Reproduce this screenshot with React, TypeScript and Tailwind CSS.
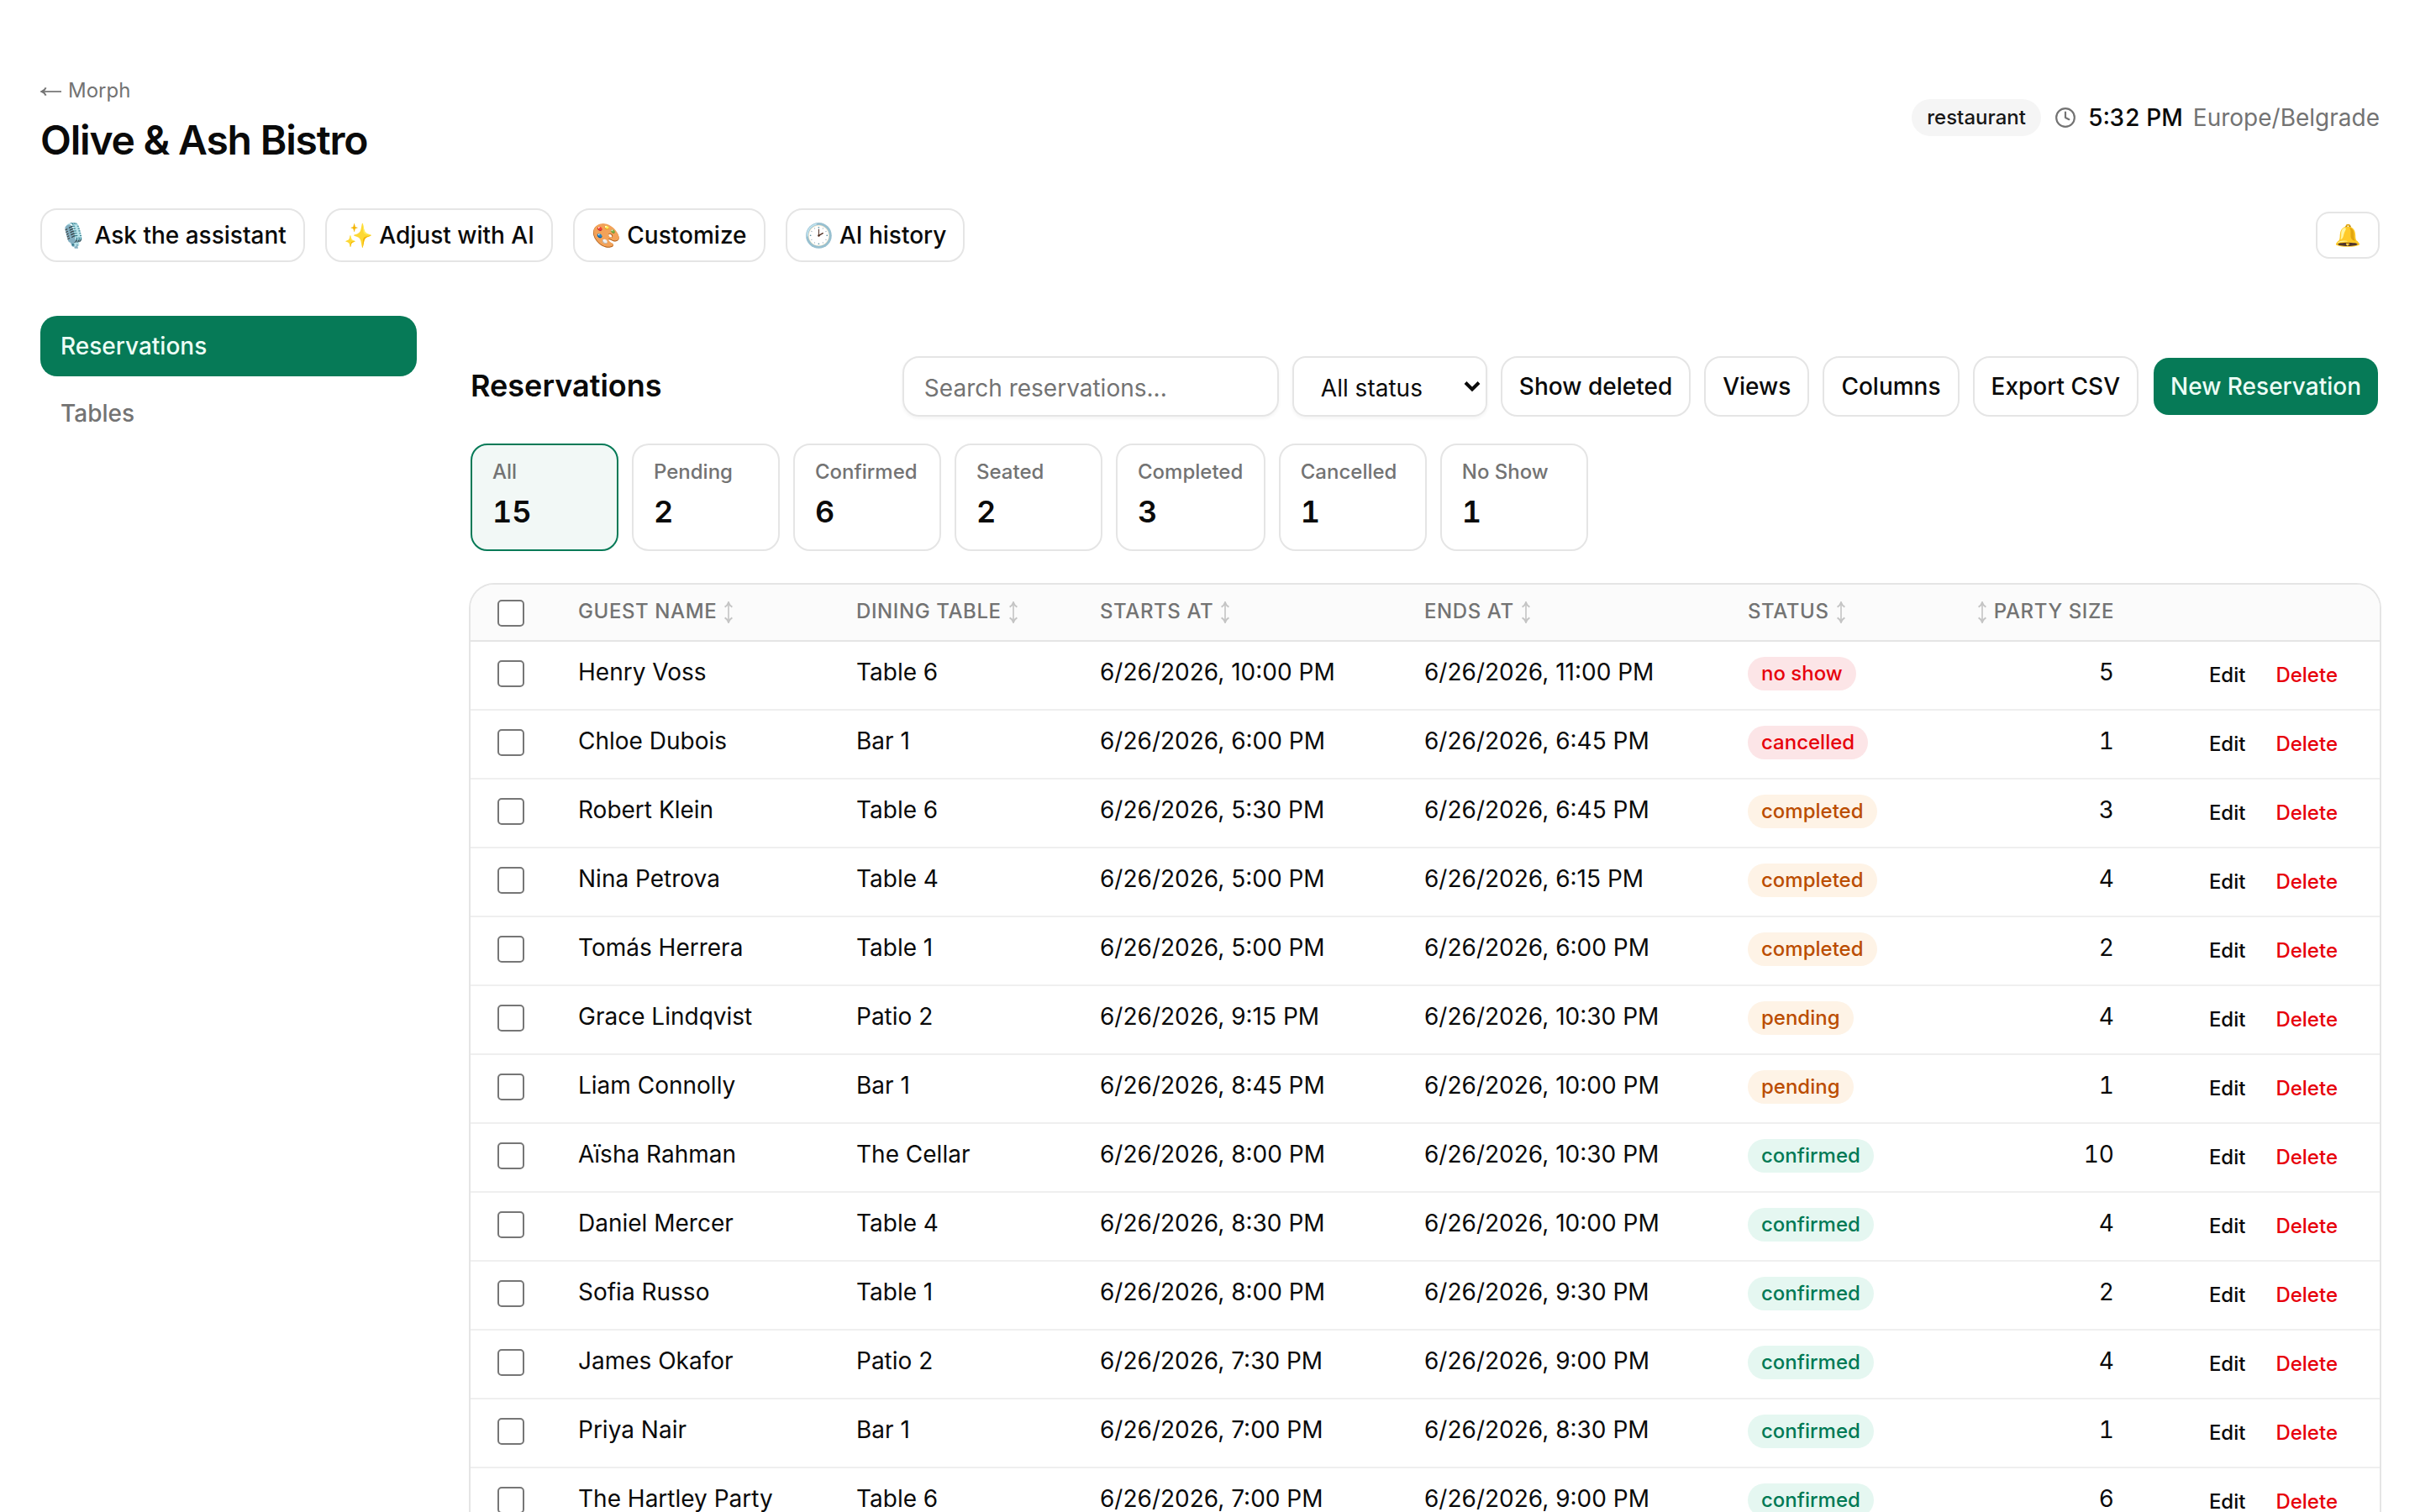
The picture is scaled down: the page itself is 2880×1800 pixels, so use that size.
import React from 'react'
import { Clock } from 'lucide-react'
import { clsx } from 'clsx'

type Status = 'no show' | 'cancelled' | 'completed' | 'pending' | 'confirmed'

interface Reservation {
  guest: string
  table: string
  starts: string
  ends: string
  status: Status
  party: number
}

const RESERVATIONS: Reservation[] = [
  { guest: 'Henry Voss', table: 'Table 6', starts: '10:00 PM', ends: '11:00 PM', status: 'no show', party: 5 },
  { guest: 'Chloe Dubois', table: 'Bar 1', starts: '6:00 PM', ends: '6:45 PM', status: 'cancelled', party: 1 },
  { guest: 'Robert Klein', table: 'Table 6', starts: '5:30 PM', ends: '6:45 PM', status: 'completed', party: 3 },
  { guest: 'Nina Petrova', table: 'Table 4', starts: '5:00 PM', ends: '6:15 PM', status: 'completed', party: 4 },
  { guest: 'Tomás Herrera', table: 'Table 1', starts: '5:00 PM', ends: '6:00 PM', status: 'completed', party: 2 },
  { guest: 'Grace Lindqvist', table: 'Patio 2', starts: '9:15 PM', ends: '10:30 PM', status: 'pending', party: 4 },
  { guest: 'Liam Connolly', table: 'Bar 1', starts: '8:45 PM', ends: '10:00 PM', status: 'pending', party: 1 },
  { guest: 'Aïsha Rahman', table: 'The Cellar', starts: '8:00 PM', ends: '10:30 PM', status: 'confirmed', party: 10 },
  { guest: 'Daniel Mercer', table: 'Table 4', starts: '8:30 PM', ends: '10:00 PM', status: 'confirmed', party: 4 },
  { guest: 'Sofia Russo', table: 'Table 1', starts: '8:00 PM', ends: '9:30 PM', status: 'confirmed', party: 2 },
  { guest: 'James Okafor', table: 'Patio 2', starts: '7:30 PM', ends: '9:00 PM', status: 'confirmed', party: 4 },
  { guest: 'Priya Nair', table: 'Bar 1', starts: '7:00 PM', ends: '8:30 PM', status: 'confirmed', party: 1 },
  { guest: 'The Hartley Party', table: 'Table 6', starts: '7:00 PM', ends: '9:00 PM', status: 'confirmed', party: 6 },
]

const COUNTS = [
  { label: 'All', value: 15 },
  { label: 'Pending', value: 2 },
  { label: 'Confirmed', value: 6 },
  { label: 'Seated', value: 2 },
  { label: 'Completed', value: 3 },
  { label: 'Cancelled', value: 1 },
  { label: 'No Show', value: 1 },
]

const BADGE: Record<Status, string> = {
  'no show': 'bg-[#fce5e7] text-[#e7000b]',
  cancelled: 'bg-[#fce5e7] text-[#e7000b]',
  completed: 'bg-[#fef3e6] text-[#bb4d00]',
  pending: 'bg-[#fef3e6] text-[#bb4d00]',
  confirmed: 'bg-[#e5f7f1] text-[#007a55]',
}

const AI_ACTIONS = ['🎙️ Ask the assistant', '✨ Adjust with AI', '🎨 Customize', '🕑 AI history']
const COLUMNS = ['Guest name', 'Dining table', 'Starts at', 'Ends at', 'Status']

function ToolButton({ children }: { children: React.ReactNode }) {
  return (
    <button className="h-[72px] shrink-0 whitespace-nowrap rounded-[20px] border-2 border-neutral-200 bg-white px-5 font-medium">
      {children}
    </button>
  )
}

function Checkbox() {
  return (
    <input
      type="checkbox"
      className="block size-8 appearance-none rounded-[5px] border-2 border-[#767676] bg-white"
    />
  )
}

function SortIcon() {
  return (
    <svg width="12" height="26" viewBox="0 0 12 26" fill="none" stroke="currentColor" strokeWidth="1.6" className="mt-[3px] opacity-40">
      <path d="M6 1.5v23" />
      <path d="M1.6 6.6Q4.8 5 6 1.2Q7.2 5 10.4 6.6M1.6 19.4Q4.8 21 6 24.8Q7.2 21 10.4 19.4" strokeWidth="2" />
    </svg>
  )
}

function SortLabel({ label, reverse }: { label: string; reverse?: boolean }) {
  return (
    <button className={clsx('inline-flex items-center gap-2 align-middle uppercase tracking-wide', reverse && 'flex-row-reverse')}>
      {label}
      <SortIcon />
    </button>
  )
}

function Header() {
  return (
    <header className="flex h-[108px] items-center justify-between">
      <div>
        <a className="-mt-0.5 flex items-center gap-[7px] text-2xl leading-8 text-[#737373]">
          <svg width="26" height="12" viewBox="0 0 26 12" fill="none" stroke="currentColor" strokeWidth="1.7" className="mt-[3px]">
            <path d="M2 6h23" />
            <path d="M6.6 1.4Q5.2 4.8 1.6 6Q5.2 7.2 6.6 10.6" strokeWidth="2" />
          </svg>
          Morph
        </a>
        <h1 className="mt-[11px] text-5xl leading-[64px] font-semibold tracking-tight">Olive &amp; Ash Bistro</h1>
      </div>
      <div className="flex items-center gap-4 pb-3">
        <span className="rounded-full border-2 border-transparent bg-neutral-100 px-4 py-1 text-2xl leading-8 font-medium text-neutral-900">
          restaurant
        </span>
        <div className="flex items-center gap-3">
          <Clock size={26} className="mr-0.5 text-[#737373]" />
          <span className="font-medium tabular-nums">5:32 PM</span>
          <span className="text-[#737373]">Europe/Belgrade</span>
        </div>
      </div>
    </header>
  )
}

function Toolbar() {
  return (
    <div className="flex items-center gap-4">
      <h2 className="mr-auto pb-0.5 text-4xl leading-[56px] font-semibold">Reservations</h2>
      <input
        placeholder="Search reservations..."
        className="h-[72px] w-[448px] rounded-[20px] border-2 border-neutral-200 px-6 pt-1 shadow-[0_2px_4px_0_rgb(0_0_0/0.05)] placeholder:text-[#737373]"
      />
      <button className="flex h-[72px] w-[232px] items-center justify-between rounded-[16px] border-2 border-neutral-200 pr-1.5 pl-8 shadow-[0_2px_4px_0_rgb(0_0_0/0.05)]">
        <span className="pt-1">All status</span>
        <svg width="20" height="14" viewBox="0 0 20 14" fill="none" stroke="currentColor" strokeWidth="4">
          <path d="M2 2.5 10 10.5 18 2.5" />
        </svg>
      </button>
      <ToolButton>Show deleted</ToolButton>
      <ToolButton>Views</ToolButton>
      <ToolButton>Columns</ToolButton>
      <ToolButton>Export CSV</ToolButton>
      <button className="h-[72px] shrink-0 whitespace-nowrap rounded-[20px] border-2 border-transparent bg-[#067a57] bg-clip-padding px-5 font-medium text-emerald-50">
        New Reservation
      </button>
    </div>
  )
}

function StatusCards() {
  return (
    <div className="mt-8 flex gap-4">
      {COUNTS.map((c, i) => (
        <button
          key={c.label}
          className={clsx(
            'flex h-32 min-w-44 flex-col items-start rounded-[20px] border-2 py-4 pr-[24.5px] pl-6',
            i === 0 ? 'border-[#067a57] bg-[#f2f8f6]' : 'border-neutral-200 bg-white'
          )}
        >
          <span className="text-2xl leading-8 font-medium text-[#737373]">{c.label}</span>
          <span className="mt-[3px] text-4xl leading-[56px] font-semibold tabular-nums">{c.value}</span>
        </button>
      ))}
    </div>
  )
}

function ReservationTable() {
  return (
    <div className="mt-10 overflow-hidden rounded-[28px] bg-white ring-2 ring-[#e5e5e5]">
      <table className="w-full table-fixed border-separate border-spacing-0">
        <colgroup>
          <col className="w-24" />
          <col className="w-[331px]" />
          <col className="w-[290px]" />
          <col className="w-[386px]" />
          <col className="w-[385px]" />
          <col className="w-[240px]" />
          <col className="w-[260px]" />
          <col />
        </colgroup>
        <thead>
          <tr className="h-[68px] bg-[#fbfbfb] text-left text-2xl leading-8 text-[#737373] *:border-b-2 *:border-neutral-200 *:px-8 *:font-medium">
            <th className="pt-0.5"><Checkbox /></th>
            {COLUMNS.map(c => (
              <th key={c} className="pb-1"><SortLabel label={c} /></th>
            ))}
            <th className="pb-1 text-right"><SortLabel label="Party size" reverse /></th>
            <th />
          </tr>
        </thead>
        <tbody>
          {RESERVATIONS.map(r => (
            <tr key={r.guest} className="h-[82px] align-top *:border-b-2 *:border-[#efefef] *:px-8 *:pt-4">
              <td><div className="pt-1.5"><Checkbox /></div></td>
              <td>{r.guest}</td>
              <td>{r.table}</td>
              <td>6/26/2026, {r.starts}</td>
              <td>6/26/2026, {r.ends}</td>
              <td>
                <span className={clsx('mt-0.5 block w-fit rounded-full px-4 py-1 text-2xl leading-8 font-medium', BADGE[r.status])}>
                  {r.status}
                </span>
              </td>
              <td className="text-right tabular-nums">{r.party}</td>
              <td>
                <div className="flex h-12 items-center justify-end text-2xl font-medium">
                  <button className="px-[18px]">Edit</button>
                  <button className="px-[18px] text-[#e7000b]">Delete</button>
                </div>
              </td>
            </tr>
          ))}
        </tbody>
      </table>
    </div>
  )
}

export default function App() {
  return (
    <div className="h-screen overflow-hidden bg-white px-12 pt-[92px] font-['Inter',sans-serif] text-[28px] leading-10 text-neutral-950">
      <Header />
      <div className="mt-12 flex items-center justify-between">
        <div className="flex gap-6">
          {AI_ACTIONS.map(a => (
            <button key={a} className="h-16 rounded-[20px] border-2 border-neutral-200 px-5 font-medium">{a}</button>
          ))}
        </div>
        <button className="h-14 rounded-[16px] border-2 border-neutral-200 px-5 text-[25.6px]">🔔</button>
      </div>
      <div className="mt-16 flex gap-16">
        <nav className="flex w-[448px] shrink-0 flex-col gap-2">
          <a className="rounded-[20px] bg-[#067a57] px-6 py-4 font-medium text-emerald-50">Reservations</a>
          <a className="rounded-[20px] px-6 py-4 font-medium text-[#737373]">Tables</a>
        </nav>
        <main className="min-w-0 flex-1 pt-12">
          <Toolbar />
          <StatusCards />
          <ReservationTable />
        </main>
      </div>
    </div>
  )
}
